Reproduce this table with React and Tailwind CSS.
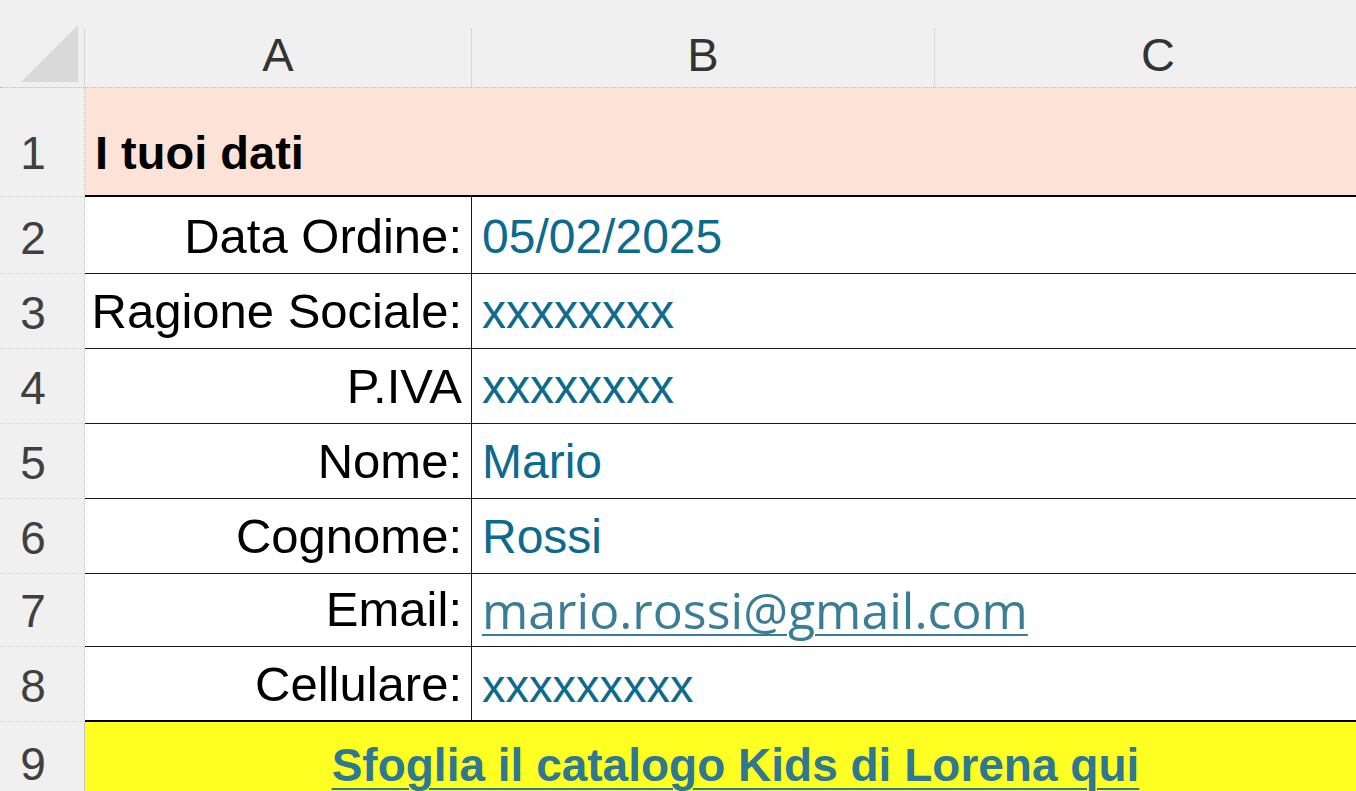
const rows = [
  { n: 2, label: 'Data Ordine:', value: '05/02/2025', h: 'h-[77px]' },
  { n: 3, label: 'Ragione Sociale:', value: 'xxxxxxxx', h: 'h-[75px]' },
  { n: 4, label: 'P.IVA', value: 'xxxxxxxx', h: 'h-[75px]' },
  { n: 5, label: 'Nome:', value: 'Mario', h: 'h-[75px]' },
  { n: 6, label: 'Cognome:', value: 'Rossi', h: 'h-[75px]' },
  { n: 7, label: 'Email:', value: 'mario.rossi@gmail.com', h: 'h-[73px]', link: true },
]

const sans = "font-['Liberation_Sans',Arial,sans-serif]"

function ColHead({ letter, width, divider = true }) {
  return (
    <div className={`${width} flex`}>
      <div className="flex-1 flex items-end justify-center pb-[9px] text-[47px] leading-none text-[#333]">
        {letter}
      </div>
      {divider && <div className="w-px mt-[28px] bg-[#d6d6d6]" />}
    </div>
  )
}

function RowNumTop({ n }) {
  return (
    <div className="w-[85px] shrink-0 flex items-start justify-center pr-[18px] pt-[19px] border-r border-[#c6c6c6] text-[46px] leading-none text-[#404040]">
      {n}
    </div>
  )
}

export default function App() {
  return (
    <div className={`w-[1356px] h-[791px] overflow-hidden bg-[#f0f0f0] ${sans}`}>
      {/* column headers */}
      <div className="flex h-[88px] border-b border-dotted border-[#b9b9b9]">
        <div className="w-[85px] shrink-0 flex">
          <div className="flex-1 pt-[25px] pl-[21px]">
            <svg width="57" height="57" viewBox="0 0 57 57">
              <polygon points="0,57 57,0 57,57" fill="#dadada" />
            </svg>
          </div>
          <div className="w-px mt-[28px] bg-[#d6d6d6]" />
        </div>
        <ColHead letter="A" width="w-[387px] shrink-0" />
        <ColHead letter="B" width="w-[463px] shrink-0" />
        <div className="flex-1 flex items-end justify-center pl-[25px] pb-[9px] text-[47px] leading-none text-[#333]">C</div>
      </div>

      {/* row 1 */}
      <div className="flex h-[109px]">
        <div className="w-[85px] shrink-0 flex items-end justify-center pr-[18px] pb-[20px] border-r border-[#c6c6c6] border-b border-b-[#d0d0d0] border-dotted text-[46px] leading-none text-[#404040]">1</div>
        <div className="flex-1 flex items-end pl-[10px] pb-[19px] bg-[#fde3d7] border-b-2 border-black text-[47px] leading-none font-bold text-black">
          I tuoi dati
        </div>
      </div>

      {rows.map(r => (
        <div key={r.n} className={`flex ${r.h}`}>
          <div className="w-[85px] shrink-0 flex items-end justify-center pr-[18px] pb-[12px] border-r border-[#c6c6c6] border-b border-dotted border-b-[#d0d0d0] text-[46px] leading-none text-[#404040]">
            {r.n}
          </div>
          <div className="flex-1 flex bg-white border-b border-[#1a1a1a]">
            <div className="w-[387px] shrink-0 flex items-end justify-end pr-[9px] pb-[12px] border-r border-[#1a1a1a] text-[49px] leading-none text-black">
              {r.label}
            </div>
            {r.link ? (
              <div className="flex-1 flex items-end pl-[10px] pb-[11px]">
                <span className="font-['Open_Sans',sans-serif] text-[50px] leading-none text-[#3a7d96] underline decoration-2 underline-offset-[5px]">
                  {r.value}
                </span>
              </div>
            ) : (
              <div className="flex-1 flex items-end pl-[10px] pb-[12px] text-[48px] leading-none text-[#0c6a8e]">
                {r.value}
              </div>
            )}
          </div>
        </div>
      ))}

      {/* row 8 */}
      <div className="flex h-[75px]">
        <div className="w-[85px] shrink-0 flex items-end justify-center pr-[18px] pb-[12px] border-r border-[#c6c6c6] border-b border-dotted border-b-[#d0d0d0] text-[46px] leading-none text-[#404040]">8</div>
        <div className="flex-1 flex bg-white border-b-2 border-black">
          <div className="w-[387px] shrink-0 flex items-end justify-end pr-[9px] pb-[11px] border-r border-[#1a1a1a] text-[49px] leading-none text-black">
            Cellulare:
          </div>
          <div className="flex-1 flex items-end pl-[10px] pb-[11px] text-[47px] leading-none text-[#0c6a8e]">
            xxxxxxxxx
          </div>
        </div>
      </div>

      {/* row 9 */}
      <div className="flex h-[80px]">
        <RowNumTop n={9} />
        <div className="flex-1 flex justify-center pl-[30px] pt-[20px] bg-[#ffff22]">
          <span className="text-[46px] leading-none font-bold text-[#2f7890] underline decoration-2 underline-offset-[7px]">
            Sfoglia il catalogo Kids di Lorena qui
          </span>
        </div>
      </div>
    </div>
  )
}
